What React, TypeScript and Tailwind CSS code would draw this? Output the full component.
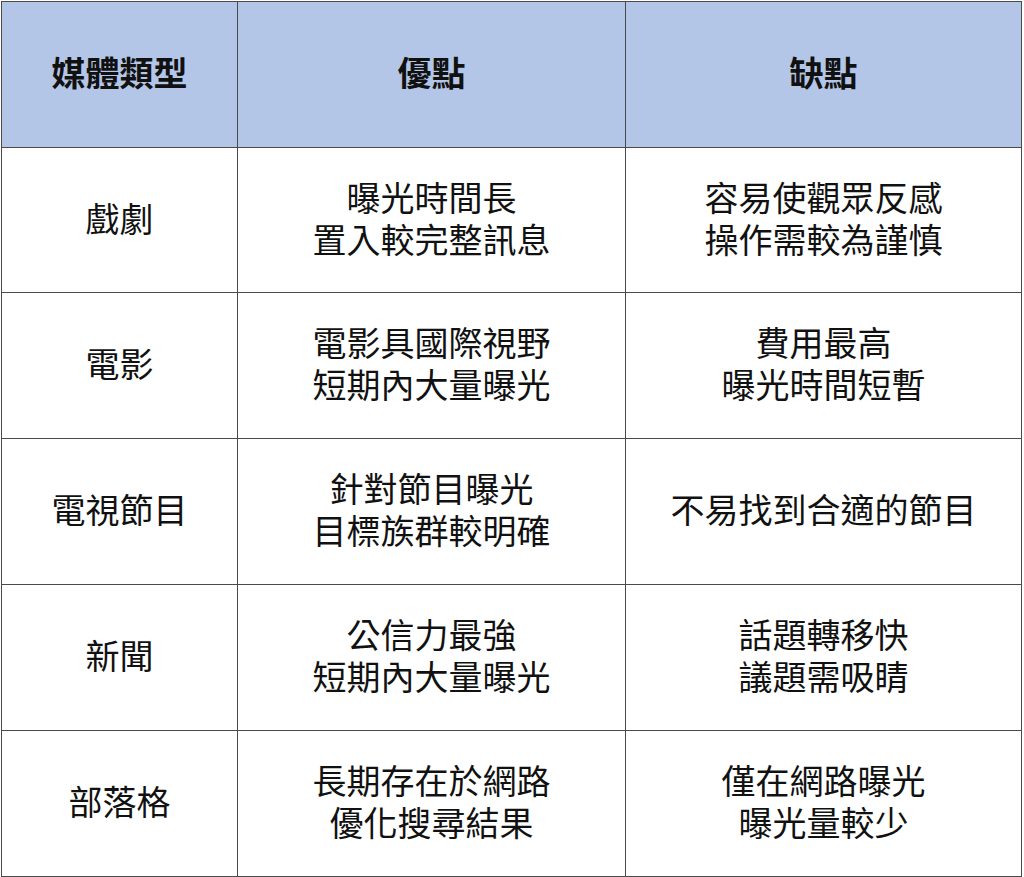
const rows: { type: string; pros: string[]; cons: string[] }[] = [
  { type: "戲劇", pros: ["曝光時間長", "置入較完整訊息"], cons: ["容易使觀眾反感", "操作需較為謹慎"] },
  { type: "電影", pros: ["電影具國際視野", "短期內大量曝光"], cons: ["費用最高", "曝光時間短暫"] },
  { type: "電視節目", pros: ["針對節目曝光", "目標族群較明確"], cons: ["不易找到合適的節目"] },
  { type: "新聞", pros: ["公信力最強", "短期內大量曝光"], cons: ["話題轉移快", "議題需吸睛"] },
  { type: "部落格", pros: ["長期存在於網路", "優化搜尋結果"], cons: ["僅在網路曝光", "曝光量較少"] },
];

function Cell({ lines, head }: { lines: string[]; head?: boolean }) {
  return (
    <div
      className={`flex flex-col items-center justify-center gap-[0px] pb-[5px] text-center text-[34px] leading-[42px] text-[#111] ${
        head ? "bg-[#b4c6e7] font-bold" : "bg-white"
      }`}
    >
      {lines.map((l) => (
        <span key={l} className="block h-[42px]">
          {l}
        </span>
      ))}
    </div>
  );
}

export default function App() {
  return (
    <div
      className="w-[1024px] h-[877px] bg-white pl-px pt-px"
      style={{ fontFamily: '"Noto Sans CJK TC", "Noto Sans", sans-serif' }}
    >
      <div className="grid w-[1021px] grid-cols-[235px_387px_395px] grid-rows-[145px_144px_145px_145px_145px_145px] gap-px bg-[#4a4a4a] p-px">
        <Cell head lines={["媒體類型"]} />
        <Cell head lines={["優點"]} />
        <Cell head lines={["缺點"]} />
        {rows.map((r) => (
          <>
            <Cell key={r.type + "t"} lines={[r.type]} />
            <Cell key={r.type + "p"} lines={r.pros} />
            <Cell key={r.type + "c"} lines={r.cons} />
          </>
        ))}
      </div>
    </div>
  );
}
